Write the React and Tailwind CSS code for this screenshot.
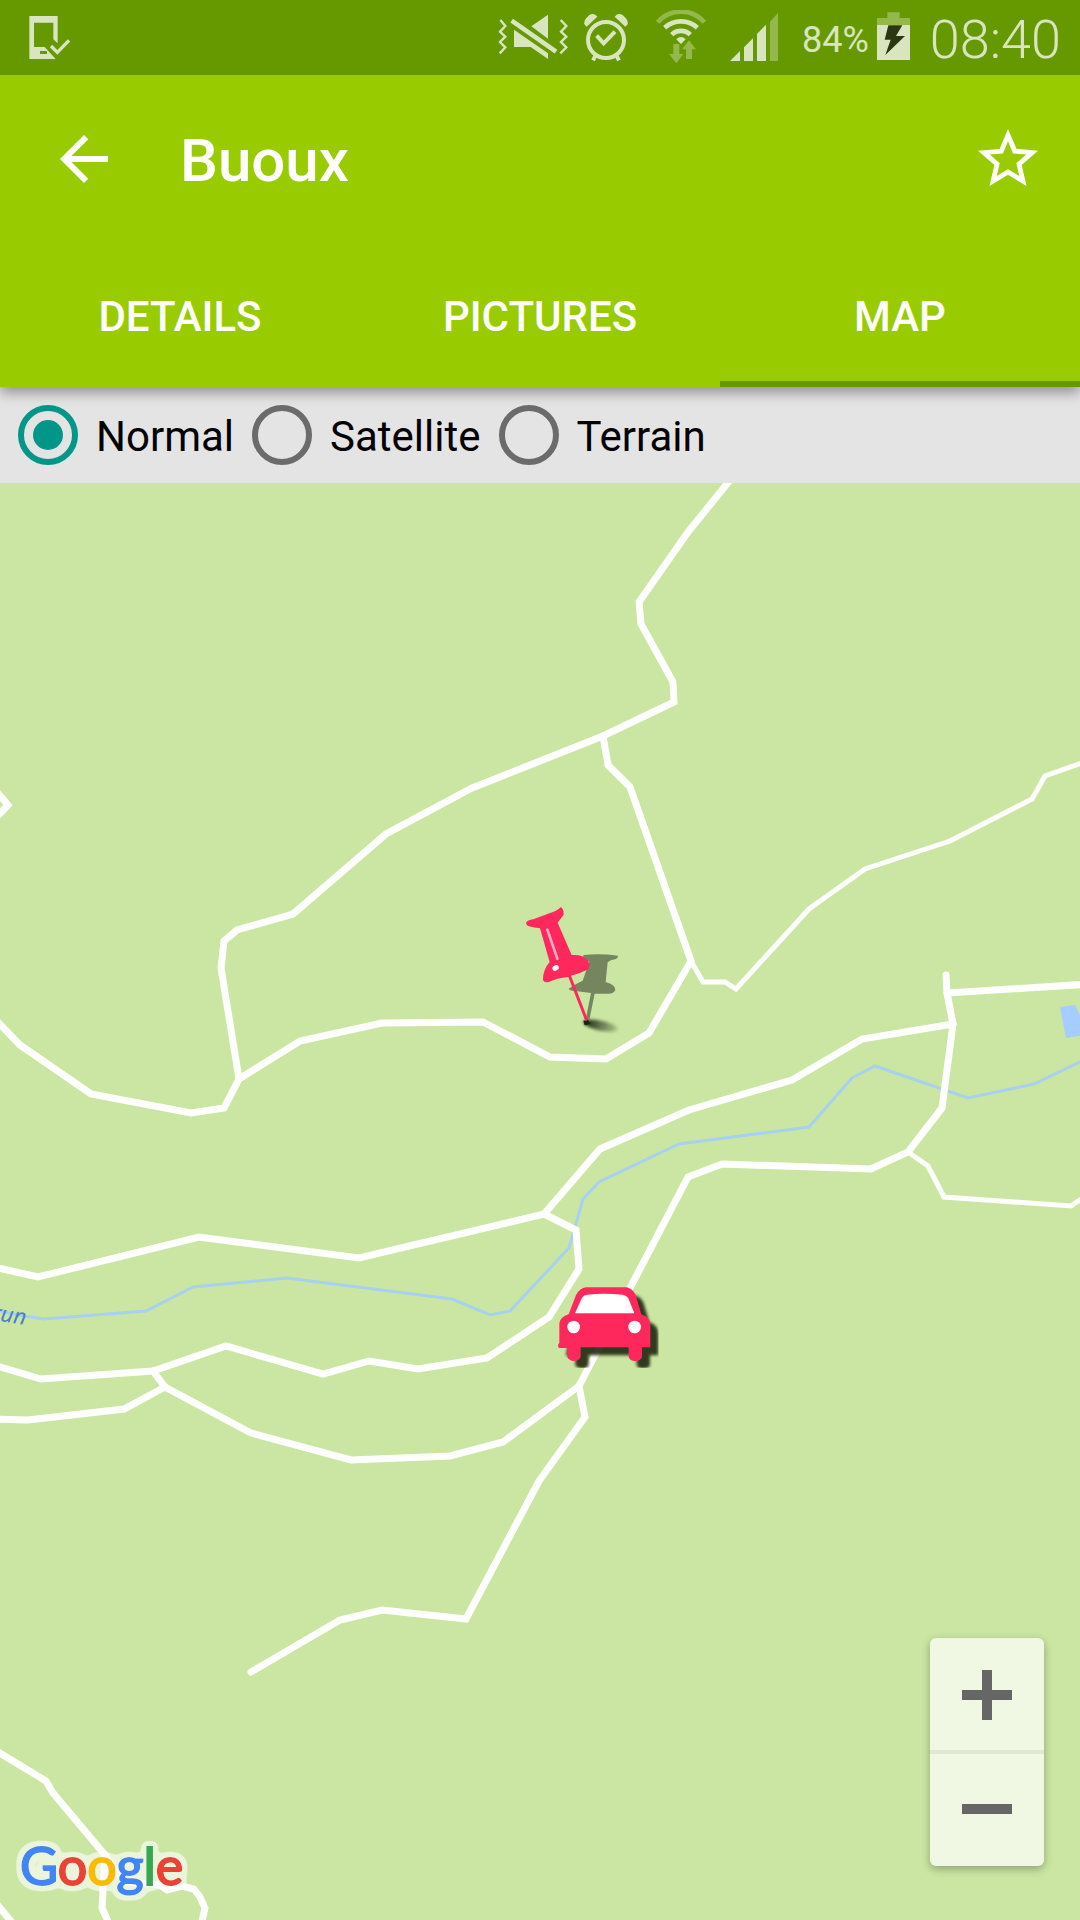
import React, { useState } from 'react';

const TABS = ['Details', 'Pictures', 'Map'];
const MAP_TYPES = ['Normal', 'Satellite', 'Terrain'];

// Main roads, drawn thick
const ROADS = [
  '735,474 688,532 639,602 641,624 673,682 674,702 603,736 540,761 472,788 386,834 293,914 237,930 224,941 221,968 239,1079',
  '603,736 608,765 630,787 691,961 649,1033 606,1059 550,1057 483,1022 382,1023 300,1041 239,1079 224,1108 191,1113 91,1094 20,1045 -10,1014',
  '-8,786 8,805 -8,822',
  '946,975 947,993 953,1024 942,1108 908,1152 871,1169 722,1164 688,1177 629,1290 579,1386 585,1417 539,1481 466,1619 382,1610 340,1620 251,1672',
  '947,993 1090,984',
  '953,1024 862,1039 792,1080 689,1110 600,1149 544,1214 359,1258 199,1237 38,1277 -10,1266',
  '544,1214 576,1230 579,1269 549,1317 487,1358 418,1369 369,1361 323,1374 226,1346 153,1371 41,1379 -10,1364',
  '153,1371 165,1387 251,1433 351,1460 450,1456 503,1442 579,1386',
  '165,1387 124,1409 28,1420 -10,1419',
  '-10,1747 46,1781 53,1793 105,1855 104,1873 102,1908 112,1930',
  '105,1855 117,1873 127,1882 160,1885 167,1890 182,1886 194,1889 200,1897 205,1908 200,1930',
  '-10,1896 20,1932',
];

// Small tracks
const TRACKS = [
  '691,961 703,982 725,982 736,989 809,909 865,869 950,841 1032,799 1045,776 1090,760',
  '908,1152 928,1166 944,1197 1071,1206 1090,1193',
];

const RIVER =
  '-10,1309 24,1316 44,1319 146,1311 193,1287 287,1278 452,1299 490,1315 510,1311 569,1248 583,1199 599,1182 679,1144 809,1127 852,1078 875,1066 968,1098 1034,1084 1090,1057';

// --- STATUS BAR ICONS ---
const PhoneCheckIcon = () => (
  <svg className="w-[42px] h-[55px]" viewBox="0 0 126 165" aria-hidden="true">
    <path
      fill="currentColor"
      fillRule="evenodd"
      d="M1 18H86V100L73 88V38H15V111H47L80 147H1zM33 123V132H54V123z"
    />
    <path fill="none" stroke="currentColor" strokeWidth="10" d="M66 108L85 127L120 91" />
  </svg>
);

const MuteIcon = () => (
  <svg className="w-[70px] h-[55px]" viewBox="0 0 210 165" aria-hidden="true">
    <g fill="none" stroke="currentColor" strokeWidth="7">
      <path d="M7 30L22 48L6 65L22 80L6 96L22 112L5 130" />
      <path d="M188 30L205 48L189 65L205 80L189 96L205 112L187 130" />
      <path strokeWidth="14" d="M41 32L174 125" />
    </g>
    <path fill="currentColor" d="M150 14V86L100 49zM48 59L150 130V147L98 111H48z" />
  </svg>
);

const AlarmIcon = () => (
  <svg className="w-[44px] h-[55px]" viewBox="0 0 132 165" aria-hidden="true">
    <g fill="none" stroke="currentColor" strokeWidth="12">
      <circle cx="66" cy="90" r="54" />
      <path d="M38 77L59 100L93 65" />
      <path d="M27 151L35 136M105 151L97 136" />
    </g>
    <path
      fill="currentColor"
      d="M8 50L1 43Q-1 32 7 24L16 15Q25 10 34 14L40 20zM124 50L131 43Q133 32 125 24L116 15Q107 10 98 14L92 20z"
    />
  </svg>
);

const WifiIcon = () => (
  <svg className="w-[50px] h-[55px]" viewBox="0 0 150 165" aria-hidden="true">
    <g fill="none" stroke="currentColor" strokeWidth="14">
      <path opacity=".4" d="M5 37A92 92 0 0 1 145 37" />
      <path d="M26 53A73 73 0 0 1 124 53" />
      <path d="M47 74A40 40 0 0 1 103 74" />
    </g>
    <path fill="currentColor" d="M61 88Q75 74 89 88L75 102z" />
    <path
      fill="currentColor"
      opacity=".4"
      d="M52 102H70V132H82L61 160L39 132H52zM99 91L120 118H108V147H90V118H78z"
    />
  </svg>
);

const SignalIcon = () => (
  <svg className="w-[48px] h-[55px]" viewBox="0 0 144 165" aria-hidden="true">
    <path fill="currentColor" d="M0 153L30 123V153zM42 153V112L69 85V153zM81 153V72L108 44V153z" />
    <path fill="currentColor" opacity=".4" d="M120 153V35L144 9V153z" />
  </svg>
);

const BatteryIcon = () => (
  <svg className="w-[33px] h-[55px]" viewBox="0 0 99 165" aria-hidden="true">
    <path fill="currentColor" opacity=".4" d="M31 7H68V24H99V45H0V24H31z" />
    <path fill="currentColor" d="M0 45H99V150H0z" />
    <path fill="#2c3613" d="M34 46H76L57 78H84L25 135L41 89H23z" />
  </svg>
);

// --- MAP MARKERS ---
const PinMarker = () => (
  <g transform="translate(500 890) scale(.3333)">
    <ellipse cx="302" cy="407" rx="52" ry="15" fill="url(#pin-fade)" transform="rotate(12 302 407)" filter="url(#soft)" />
    <path fill="#1c2410" d="M250 392L264 390L272 402L254 406z" />
    <path
      fill="#75865f"
      d="M250 195Q300 190 354 197Q354 208 334 210L323 217L317 276Q347 284 346 300Q342 311 326 311L284 311L268 390H257L273 309L232 304Q208 302 206 297Q214 288 248 272L268 215L250 207z"
    />
    <path
      fill="#ff285c"
      d="M78 98Q82 91 100 88L148 70Q172 62 183 51Q192 58 191 74L173 98L215 195Q250 193 263 211Q274 228 262 239Q240 250 213 257L264 389L256 393L205 261Q170 264 147 276Q133 279 129 271Q128 240 149 216L120 115Q86 111 80 105z"
    />
    <path stroke="#ffb0c4" strokeWidth="8" strokeLinecap="round" d="M142 119L172 206" />
    <ellipse cx="167" cy="234" rx="10" ry="8" fill="#fff" transform="rotate(-30 167 234)" />
  </g>
);

const CAR_BODY =
  'M168 82H290Q308 86 317 105L334 163Q361 172 361 195V262H336V291Q332 303 315 303Q300 303 296 291V262H152V291Q147 303 132 303Q117 302 112 291V264H87Q81 256 88 248V190Q91 170 116 163L138 105Q150 84 168 82z';

const CarMarker = () => (
  <g transform="translate(530 1260) scale(.3333)">
    <g clipPath="url(#car-shadow)">
      <path fill="#1c2410" opacity=".88" transform="translate(24 24)" filter="url(#soft)" d={CAR_BODY} />
    </g>
    <path fill="#ff285c" d={CAR_BODY} />
    <path fill="#fff" d="M135 160L156 113Q162 104 172 104Q220 99 278 104Q290 106 295 115L313 160z" />
    <circle cx="131" cy="201" r="19" fill="#fff" />
    <circle cx="314" cy="201" r="19" fill="#fff" />
  </g>
);

const MapCanvas = () => (
  <svg
    className="absolute inset-0 w-full h-full"
    viewBox="0 483 1080 1437"
    preserveAspectRatio="xMidYMid slice"
    role="img"
    aria-label="Map of Buoux"
  >
    <defs>
      <filter id="soft" x="-20%" y="-40%" width="140%" height="180%">
        <feGaussianBlur stdDeviation="5" />
      </filter>
      <linearGradient id="pin-fade">
        <stop offset="0" stopColor="#1c2410" />
        <stop offset="1" stopColor="#1c2410" stopOpacity=".15" />
      </linearGradient>
      <clipPath id="car-shadow">
        <path d="M80 70H386V323H80z" />
      </clipPath>
    </defs>

    <path fill="#a5cdff" d="M1060 1007L1075 1005L1090 1034L1066 1038z" />
    <polyline points={RIVER} fill="none" stroke="#a8d0ef" strokeWidth="3" />

    <g fill="none" stroke="#fff" strokeLinecap="round">
      {TRACKS.map((points) => (
        <polyline key={points} points={points} strokeWidth="5" />
      ))}
      {ROADS.map((points) => (
        <polyline key={points} points={points} strokeWidth="7" />
      ))}
    </g>

    <text
      transform="translate(25 1325) rotate(9)"
      textAnchor="end"
      className="fill-[#4a80c4] text-[22px] italic font-['Noto_Sans',sans-serif]"
    >
      run
    </text>

    <PinMarker />
    <CarMarker />
  </svg>
);

const GoogleLogo = () => (
  <svg className="block w-[190px] h-[84px]" viewBox="0 0 190 84" role="img" aria-label="Google">
    <defs>
      <filter id="halo" x="-10%" y="-20%" width="120%" height="140%">
        <feMorphology in="SourceAlpha" operator="dilate" radius="3" />
        <feGaussianBlur stdDeviation="3" />
        <feComponentTransfer result="grown">
          <feFuncA type="linear" slope="8" intercept="-1.5" />
        </feComponentTransfer>
        <feFlood floodColor="#fff" floodOpacity=".6" />
        <feComposite in2="grown" operator="in" />
        <feMerge>
          <feMergeNode />
          <feMergeNode in="SourceGraphic" />
        </feMerge>
      </filter>
    </defs>
    <text x="8" y="61" filter="url(#halo)" strokeWidth="2" className="text-[52px] font-['Lato',sans-serif]">
      <tspan fill="#4285f4" stroke="#4285f4">G</tspan>
      <tspan fill="#ea4335" stroke="#ea4335">o</tspan>
      <tspan fill="#fbbc05" stroke="#fbbc05">o</tspan>
      <tspan fill="#4285f4" stroke="#4285f4">g</tspan>
      <tspan fill="#34a853" stroke="#34a853">l</tspan>
      <tspan fill="#ea4335" stroke="#ea4335">e</tspan>
    </text>
  </svg>
);

const App = () => {
  const [tab, setTab] = useState('Map');
  const [mapType, setMapType] = useState('Normal');

  return (
    <div className="flex flex-col min-h-screen bg-[#cbe6a3] font-['Roboto',sans-serif]">

      {/* STATUS BAR */}
      <div className="flex-none relative z-20 h-[75px] bg-[#669900] text-[#d9e5bf] flex items-center justify-between pl-[29px] pr-[19px]">
        <PhoneCheckIcon />
        <div className="flex items-center">
          <MuteIcon />
          <div className="w-4" />
          <AlarmIcon />
          <div className="w-7" />
          <WifiIcon />
          <div className="w-6" />
          <SignalIcon />
          <span className="pt-1 pl-6 pr-2 text-4xl">84%</span>
          <BatteryIcon />
          <span className="pt-1 pl-5 text-[54px] leading-none font-light">08:40</span>
        </div>
      </div>

      {/* HEADER */}
      <header className="flex-none relative z-10 bg-[#99cc00] text-white shadow-[0_6px_12px_rgba(0,0,0,0.35)]">
        <div className="h-[168px] flex items-center pl-12 pr-9">
          <button type="button" aria-label="Back">
            <svg className="w-[72px] h-[72px]" viewBox="0 0 24 24" fill="currentColor">
              <path d="M20 11H7.83l5.59-5.59L12 4l-8 8 8 8 1.41-1.41L7.83 13H20v-2z" />
            </svg>
          </button>
          <h1 className="flex-1 pt-1 pl-[60px] text-[60px] leading-none font-medium">Buoux</h1>
          <button type="button" aria-label="Add to favourites">
            <svg className="w-[72px] h-[72px]" viewBox="0 0 24 24" fill="currentColor">
              <path d="M22 9.24l-7.19-.62L12 2 9.19 8.63 2 9.24l5.46 4.73L5.82 21 12 17.27 18.18 21l-1.63-7.03L22 9.24zM12 15.4l-3.76 2.27 1-4.28-3.32-2.88 4.38-.38L12 6.1l1.71 4.04 4.38.38-3.32 2.88 1 4.28L12 15.4z" />
            </svg>
          </button>
        </div>

        <nav className="grid grid-cols-3 h-36" role="tablist">
          {TABS.map((name) => (
            <button
              key={name}
              type="button"
              role="tab"
              aria-selected={tab === name}
              onClick={() => setTab(name)}
              className={`pt-1 border-y-6 border-t-transparent text-[42px] leading-none font-medium uppercase ${
                tab === name ? 'border-b-[#669900]' : 'border-b-transparent'
              }`}
            >
              {name}
            </button>
          ))}
        </nav>
      </header>

      {/* MAP TYPE */}
      <div role="radiogroup" aria-label="Map type" className="flex-none h-24 bg-[#e4e4e4] flex items-center">
        {MAP_TYPES.map((type) => (
          <label key={type} className="flex items-center gap-[18px] pl-[18px] text-[42px] leading-12 text-black">
            <input
              type="radio"
              name="mapType"
              value={type}
              checked={mapType === type}
              onChange={() => setMapType(type)}
              className="appearance-none flex-none size-[60px] rounded-full border-6 border-[#6b6b6b] checked:border-[#009688] grid place-items-center before:size-[30px] before:rounded-full checked:before:bg-[#009688]"
            />
            <span className="pt-1">{type}</span>
          </label>
        ))}
      </div>

      {/* MAP */}
      <main className="flex-1 relative min-h-96 overflow-hidden">
        <MapCanvas />

        <a href="#google" className="absolute left-3 bottom-3">
          <GoogleLogo />
        </a>

        <div className="absolute right-9 bottom-[54px] w-[114px] rounded-md overflow-hidden bg-[#f0f7e3] text-[#666666] shadow-[0_3px_9px_rgba(0,0,0,0.3)]">
          <button type="button" aria-label="Zoom in" className="w-full h-[116px] pt-0.5 border-b-4 border-[#e0e7d5] flex items-center justify-center">
            <svg className="w-[50px] h-[50px]" viewBox="0 0 50 50" fill="currentColor">
              <path d="M20 0H30V20H50V30H30V50H20V30H0V20H20z" />
            </svg>
          </button>
          <button type="button" aria-label="Zoom out" className="w-full h-[112px] pb-0.5 flex items-center justify-center">
            <svg className="w-[50px] h-[50px]" viewBox="0 0 50 50" fill="currentColor">
              <path d="M0 20H50V30H0z" />
            </svg>
          </button>
        </div>
      </main>

    </div>
  );
};

export default App;
